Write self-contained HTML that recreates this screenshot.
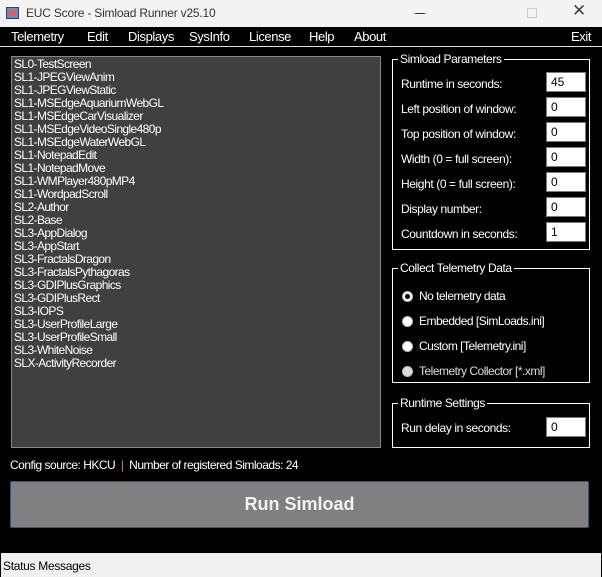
<!DOCTYPE html>
<html><head><style>
*{margin:0;padding:0;box-sizing:border-box}
body{width:602px;height:577px;background:#000;font-family:"Liberation Sans",sans-serif;font-size:12px;color:#fff;position:relative;overflow:hidden}
.a{position:absolute}
#title{left:0;top:0;width:602px;height:27px;background:#f3f3f3;color:#333}
#menu{left:0;top:27px;width:602px;height:19px;background:#000;font-size:13px}
#menu span{position:absolute;top:2px;letter-spacing:-0.4px}
.list{left:11px;top:56px;width:370px;height:392px;background:#404040;border:1px solid #888;padding:1px 2px;line-height:13px;letter-spacing:-0.6px}
.grp{border:1px solid #fff}
.gl{position:absolute;top:-8px;left:5px;background:#000;padding:0 2px;letter-spacing:-0.4px}
.row{position:absolute;left:8px;letter-spacing:-0.4px}
.in{position:absolute;left:153px;width:40px;height:20px;background:#fff;color:#000;border:1px solid #7a7a7a;padding:2px 4px}
.rad{position:absolute;left:9px;letter-spacing:-0.5px}
.rad i{display:inline-block;width:11px;height:11px;border-radius:50%;background:#fff;vertical-align:-2px;margin-right:6px;border:1px solid #bbb}
</style></head><body>
<div class="a" id="title">
<div class="a" style="left:6px;top:7px;width:13px;height:12px;background:#5b8fd0;border:1px solid #345"></div>
<div class="a" style="left:9px;top:10px;width:7px;height:6px;background:#e55"></div>
<div class="a" style="left:26px;top:6px;font-size:12px;letter-spacing:-0.2px">EUC Score - Simload Runner v25.10</div>
<div class="a" style="left:415px;top:13px;width:10px;height:1px;background:#333"></div>
<div class="a" style="left:527px;top:8px;width:10px;height:10px;border:1px solid #ccc"></div>
<div class="a" style="left:572px;top:1px;font-size:17px;color:#444">✕</div>
</div>
<div class="a" id="menu">
<span style="left:11px">Telemetry</span><span style="left:87px">Edit</span><span style="left:128px">Displays</span><span style="left:189px">SysInfo</span><span style="left:249px">License</span><span style="left:309px">Help</span><span style="left:354px">About</span><span style="left:571px">Exit</span>
</div>
<div class="a" style="left:0;top:46px;width:602px;height:1px;background:#ddd"></div>
<div class="a list">SL0-TestScreen<br>SL1-JPEGViewAnim<br>SL1-JPEGViewStatic<br>SL1-MSEdgeAquariumWebGL<br>SL1-MSEdgeCarVisualizer<br>SL1-MSEdgeVideoSingle480p<br>SL1-MSEdgeWaterWebGL<br>SL1-NotepadEdit<br>SL1-NotepadMove<br>SL1-WMPlayer480pMP4<br>SL1-WordpadScroll<br>SL2-Author<br>SL2-Base<br>SL3-AppDialog<br>SL3-AppStart<br>SL3-FractalsDragon<br>SL3-FractalsPythagoras<br>SL3-GDIPlusGraphics<br>SL3-GDIPlusRect<br>SL3-IOPS<br>SL3-UserProfileLarge<br>SL3-UserProfileSmall<br>SL3-WhiteNoise<br>SLX-ActivityRecorder</div>

<div class="a grp" style="left:392px;top:59px;width:198px;height:191px">
<div class="gl">Simload Parameters</div>
<div class="row" style="top:17px">Runtime in seconds:</div><div class="in" style="top:12px">45</div>
<div class="row" style="top:42px">Left position of window:</div><div class="in" style="top:37px">0</div>
<div class="row" style="top:67px">Top position of window:</div><div class="in" style="top:62px">0</div>
<div class="row" style="top:92px">Width (0 = full screen):</div><div class="in" style="top:87px">0</div>
<div class="row" style="top:117px">Height (0 = full screen):</div><div class="in" style="top:112px">0</div>
<div class="row" style="top:142px">Display number:</div><div class="in" style="top:137px">0</div>
<div class="row" style="top:167px">Countdown in seconds:</div><div class="in" style="top:162px">1</div>
</div>

<div class="a grp" style="left:392px;top:268px;width:198px;height:115px">
<div class="gl">Collect Telemetry Data</div>
<div class="rad" style="top:20px"><i style="background:radial-gradient(circle,#000 2px,#fff 3px)"></i>No telemetry data</div>
<div class="rad" style="top:45px"><i></i>Embedded [SimLoads.ini]</div>
<div class="rad" style="top:70px"><i></i>Custom [Telemetry.ini]</div>
<div class="rad" style="top:95px;color:#ddd"><i style="background:#ddd"></i>Telemetry Collector [*.xml]</div>
</div>

<div class="a grp" style="left:392px;top:403px;width:198px;height:45px">
<div class="gl">Runtime Settings</div>
<div class="row" style="top:17px">Run delay in seconds:</div><div class="in" style="top:13px">0</div>
</div>

<div class="a" style="left:10px;top:458px;letter-spacing:-0.5px">Config source: HKCU <span style="color:#d08a2a">&nbsp;|&nbsp;</span> Number of registered Simloads: 24</div>
<div class="a" style="left:10px;top:481px;width:579px;height:47px;background:#808080;border:1px solid #2a5a90;border-radius:2px;text-align:center;line-height:45px;font-size:18px;font-weight:bold;color:#f2f2f2">Run Simload</div>
<div class="a" style="left:1px;top:553px;width:600px;height:24px;background:#f0f0f0;color:#000;padding:6px 2px;letter-spacing:-0.3px">Status Messages</div>
</body></html>
